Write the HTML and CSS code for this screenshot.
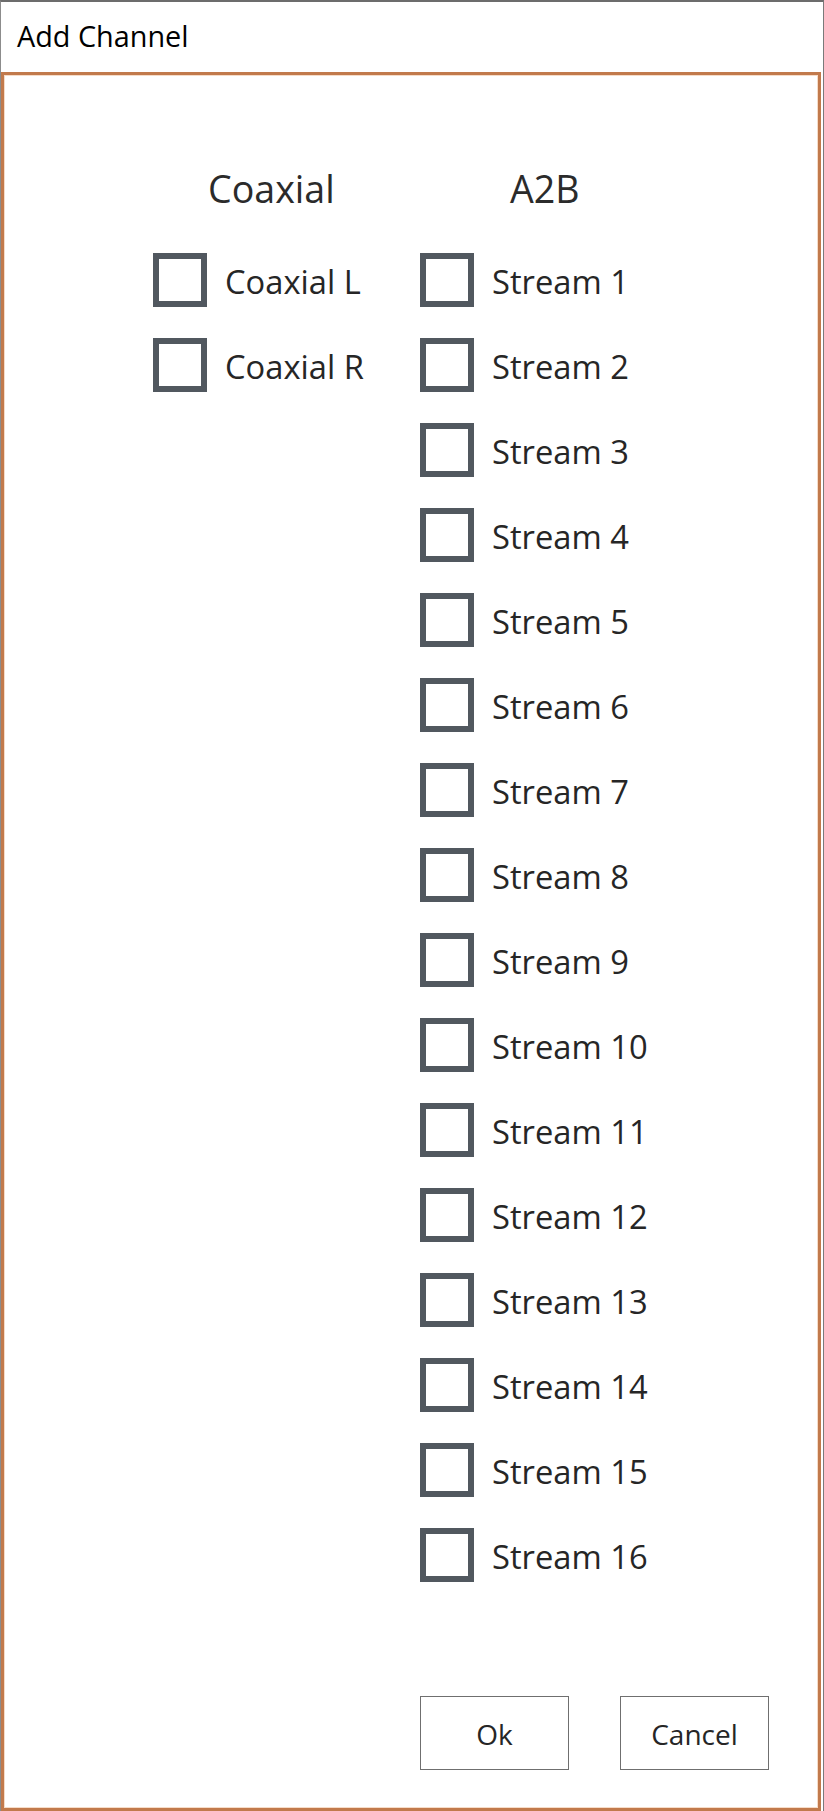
FILE: index.html
```html
<!DOCTYPE html>
<html lang="en">
<head>
<meta charset="utf-8">
<title>Add Channel</title>
<link rel="stylesheet" href="styles.css">
</head>
<body>
<div class="window">
  <div class="titlebar">Add Channel</div>
  <div class="content">
    <div class="columns">
      <div class="column column-coax">
        <div class="col-header header-coax">Coaxial</div>
        <div class="items">
          <label class="item"><span class="box"></span><span class="label">Coaxial L</span></label>
          <label class="item"><span class="box"></span><span class="label">Coaxial R</span></label>
        </div>
      </div>
      <div class="column column-a2b">
        <div class="col-header header-a2b">A2B</div>
        <div class="items">
          <label class="item"><span class="box"></span><span class="label">Stream 1</span></label>
          <label class="item"><span class="box"></span><span class="label">Stream 2</span></label>
          <label class="item"><span class="box"></span><span class="label">Stream 3</span></label>
          <label class="item"><span class="box"></span><span class="label">Stream 4</span></label>
          <label class="item"><span class="box"></span><span class="label">Stream 5</span></label>
          <label class="item"><span class="box"></span><span class="label">Stream 6</span></label>
          <label class="item"><span class="box"></span><span class="label">Stream 7</span></label>
          <label class="item"><span class="box"></span><span class="label">Stream 8</span></label>
          <label class="item"><span class="box"></span><span class="label">Stream 9</span></label>
          <label class="item"><span class="box"></span><span class="label">Stream 10</span></label>
          <label class="item"><span class="box"></span><span class="label">Stream 11</span></label>
          <label class="item"><span class="box"></span><span class="label">Stream 12</span></label>
          <label class="item"><span class="box"></span><span class="label">Stream 13</span></label>
          <label class="item"><span class="box"></span><span class="label">Stream 14</span></label>
          <label class="item"><span class="box"></span><span class="label">Stream 15</span></label>
          <label class="item"><span class="box"></span><span class="label">Stream 16</span></label>
        </div>
      </div>
    </div>
    <div class="buttons">
      <button class="btn">Ok</button>
      <button class="btn">Cancel</button>
    </div>
  </div>
</div>
</body>
</html>
```

FILE: styles.css
```css
html, body {
  margin: 0;
  padding: 0;
  background: #ffffff;
}

body {
  font-family: "Open Sans", "Noto Sans", "DejaVu Sans", sans-serif;
  color: #2b2b2b;
}

.window {
  width: 824px;
  height: 1811px;
  box-sizing: border-box;
  border-top: 2px solid #6c6c6c;
  border-left: 1px solid #8c8c8c;
  border-right: 1px solid #7a7a7a;
  display: flex;
  flex-direction: column;
  background: #ffffff;
}

.titlebar {
  height: 70px;
  box-sizing: border-box;
  padding-left: 16px;
  padding-bottom: 2px;
  font-size: 28.8px;
  line-height: 68px;
  color: #000000;
  flex: none;
}

.content {
  width: 820px;
  flex: 1;
  box-sizing: border-box;
  border: 3px solid #c27a4c;
  box-shadow: inset 0 0 0 1px #f6dcc8;
  display: flex;
  flex-direction: column;
}

.columns {
  display: flex;
  padding-top: 89px;
  padding-left: 149px;
}

.column {
  display: flex;
  flex-direction: column;
}

.column-coax {
  width: 267px;
}

.col-header {
  font-size: 37.6px;
  line-height: 50px;
  color: #2b2b2b;
  margin-bottom: 39px;
}

.header-coax {
  padding-left: 55px;
}

.header-a2b {
  padding-left: 90px;
}

.items {
  display: flex;
  flex-direction: column;
  gap: 31px;
}

.item {
  display: flex;
  align-items: flex-start;
  height: 54px;
}

.box {
  width: 54px;
  height: 54px;
  box-sizing: border-box;
  border: 6px solid #51585f;
  background: #ffffff;
  flex: none;
}

.label {
  margin-left: 18px;
  margin-top: 2px;
  font-size: 32.7px;
  line-height: 54px;
  color: #262626;
  white-space: nowrap;
}

.buttons {
  margin-top: auto;
  display: flex;
  justify-content: flex-end;
  gap: 51px;
  padding-right: 49px;
  margin-bottom: 38px;
}

.btn {
  width: 149px;
  height: 74px;
  box-sizing: border-box;
  border: 1px solid #6f6f6f;
  background: #ffffff;
  font-family: "Open Sans", "Noto Sans", "DejaVu Sans", sans-serif;
  font-size: 28px;
  color: #262626;
  padding: 0;
  padding-top: 2px;
}
```
